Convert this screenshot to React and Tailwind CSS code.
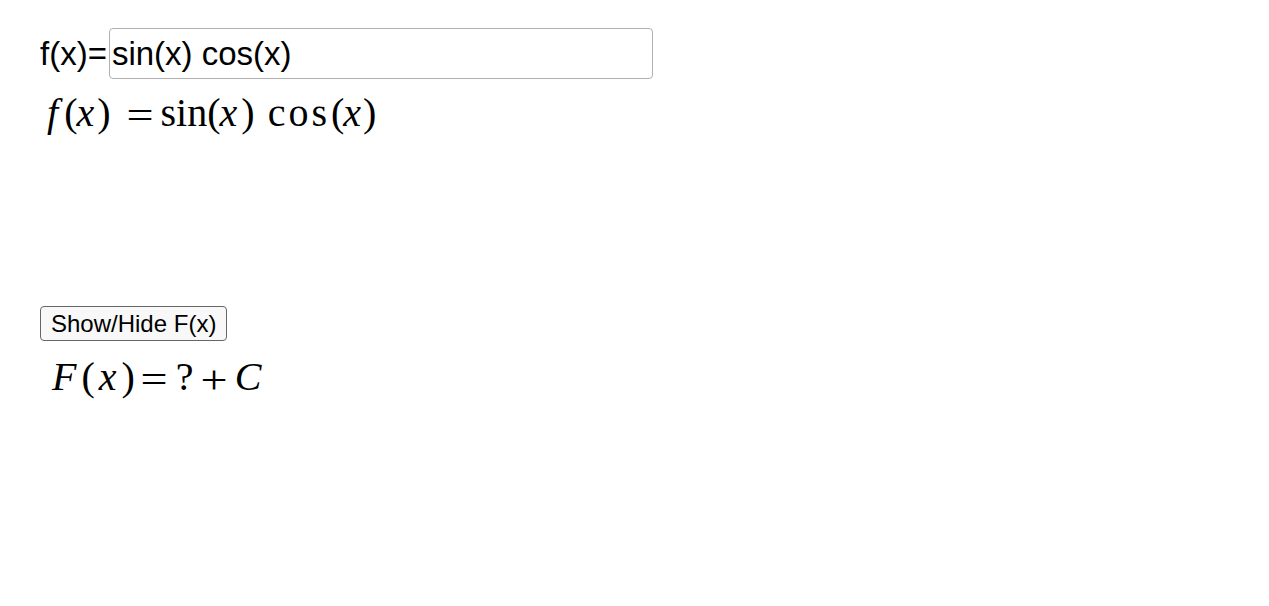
export default function App() {
  const serif = { fontFamily: '"Liberation Serif", "Times New Roman", serif' };
  return (
    <div className="relative w-[1269px] h-[606px] bg-white overflow-hidden" style={{ fontFamily: '"Liberation Sans", Arial, sans-serif' }}>
      <div className="pl-[40px] pt-[28px] flex flex-col">
        <div className="flex items-center h-[51px]">
          <span className="text-[33px] leading-none text-black">f(x)=</span>
          <div className="ml-[2px] w-[544px] h-[51px] border border-[#b0b0b0] rounded-[4px] flex items-center pl-[2px]">
            <span className="text-[33px] leading-none text-black">sin(x) cos(x)</span>
          </div>
        </div>
        <div className="mt-[14px] h-[40px] flex items-start text-[40px] leading-[40px] text-black whitespace-pre" style={serif}>
          <span className="ml-[7px] italic">f</span>
          <span className="ml-[6px]">(</span>
          <span className="ml-[-1px] italic">x</span>
          <span className="ml-[3px]">)</span>
          <span className="ml-[15px] inline-block w-[28px] text-center scale-x-[1.2] translate-y-[3px]">=</span>
          <span className="ml-[7px]">sin</span>
          <span>(</span>
          <span className="ml-[-1px] italic">x</span>
          <span className="ml-[4px]">)</span>
          <span className="ml-[13px] tracking-[3px]">cos</span>
          <span className="ml-[1px]">(</span>
          <span className="ml-[-1px] italic">x</span>
          <span className="ml-[2px]">)</span>
        </div>
        <div className="mt-[173px] flex">
          <button className="h-[35px] px-[10px] border border-[#666666] rounded-[4px] bg-[#f8f8f8] text-[24px] leading-none text-black">
            Show/Hide F(x)
          </button>
        </div>
        <div className="mt-[16px] h-[40px] flex items-start text-[40px] leading-[40px] text-black whitespace-pre" style={serif}>
          <span className="ml-[12px] italic">F</span>
          <span className="ml-[5px]">(</span>
          <span className="ml-[4px] italic">x</span>
          <span className="ml-[5px]">)</span>
          <span className="ml-[5px] inline-block w-[28px] text-center scale-x-[1.2] translate-y-[3px]">=</span>
          <span className="ml-[8px]">?</span>
          <span className="ml-[6px] inline-block w-[28px] text-center scale-x-[1.2] translate-y-[3px]">+</span>
          <span className="ml-[7px] italic">C</span>
        </div>
      </div>
    </div>
  );
}
